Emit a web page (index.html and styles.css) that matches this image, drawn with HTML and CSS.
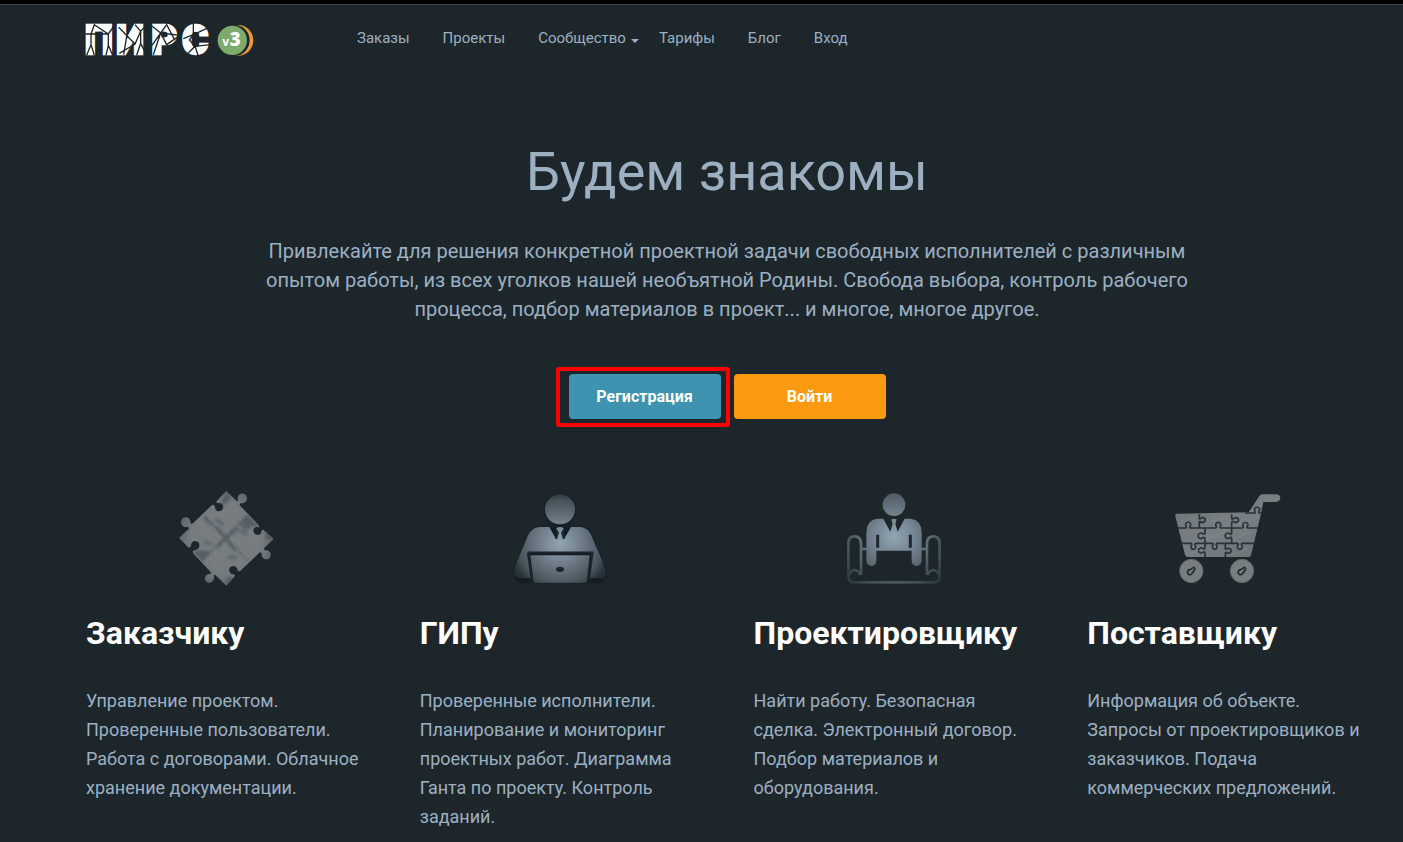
FILE: index.html
```html
<!DOCTYPE html>
<html lang="ru">
<head>
<meta charset="utf-8">
<meta name="viewport" content="width=device-width, initial-scale=1">
<title>ПИРС</title>
<link rel="stylesheet" href="styles.css">
</head>
<body>
<header class="header">
  <a class="logo" href="#" aria-label="ПИРС v3">
    <svg class="logo-image" viewBox="24 60 516 120">
      <text class="logo-name" x="26 121 226 318" y="162">ПИРС</text>
      <path class="logo-cracks" d="M28 102H97M45 102L55 74L97 102L114 78M45 102V134L32 166M45 134L55 166M97 102V136L90 166M97 136L110 166M128 82L177 132L194 94L177 74M194 94L212 74M177 132L130 160M152 110L143 164M194 94V130L182 166M194 130L212 166M254 99L228 78M254 99L272 74L294 116M254 99L312 106M254 99L232 164M254 99L272 134L312 106M228 136L254 99M322 116L352 104V72M352 104L404 80M352 104L340 120L357 139L404 134M357 139L334 162M357 139L367 168"/>
      <circle cx="486" cy="121" r="46" fill="#e79a36"/>
      <circle cx="474" cy="121" r="47" fill="#1c262b"/>
      <circle cx="469" cy="121" r="44" fill="#7eaa6c"/>
      <text class="logo-v" x="439" y="139">v</text>
      <text class="logo-three" x="461" y="139">3</text>
    </svg>
  </a>
  <nav class="nav">
    <a href="#">Заказы</a>
    <a href="#">Проекты</a>
    <a class="has-menu" href="#">Сообщество</a>
    <a href="#">Тарифы</a>
    <a href="#">Блог</a>
    <a href="#">Вход</a>
  </nav>
</header>
<main class="main">
  <section class="hero">
    <h1>Будем знакомы</h1>
    <p>Привлекайте для решения конкретной проектной задачи свободных исполнителей с различным опытом работы, из всех уголков нашей необъятной Родины. Свобода выбора, контроль рабочего процесса, подбор материалов в проект... и многое, многое другое.</p>
    <div class="actions">
      <button class="button register" type="button">Регистрация</button>
      <button class="button login" type="button">Войти</button>
    </div>
  </section>
  <section class="roles">
    <article class="role">
      <svg class="role-icon" viewBox="4 15 330 330" aria-hidden="true">
        <defs>
          <radialGradient id="steel"><stop offset="0" stop-color="#777d81"/><stop offset=".75" stop-color="#757b7f"/><stop offset="1" stop-color="#62696e"/></radialGradient>
          <filter id="soft"><feGaussianBlur stdDeviation="3"/></filter>
          <clipPath id="puzzle-clip"><path id="puzzle" d="M170 33L201 63C207 63 203 57 205 49C211 36 230 39 232 53C233 65 225 71 213 70C207 71 210 76 214 80L266 134C272 142 266 142 260 141C249 143 249 157 257 163C267 169 276 162 276 153C277 147 281 149 285 153L312 176L284 204C281 209 285 211 293 211C305 214 307 230 297 236C286 241 276 233 276 224C276 216 273 215 268 219L214 271C207 277 204 273 203 266C198 255 182 256 179 266C176 277 184 283 192 283C198 284 195 290 191 294L170 317L139 287C134 281 132 286 133 295C131 308 116 313 109 304C102 295 107 284 118 282C125 282 126 279 121 274L73 223C66 216 70 211 78 210C89 208 93 194 86 187C77 179 65 185 64 195C64 202 59 205 54 200L28 174L56 148C61 143 57 140 47 142C36 139 31 129 36 119C43 108 58 110 61 121C62 129 64 134 70 130L126 76C133 71 136 78 137 87C141 97 157 96 160 85C163 74 155 68 146 69C139 69 139 65 143 61Z"/></clipPath>
        </defs>
        <use href="#puzzle" fill="url(#steel)"/>
        <g clip-path="url(#puzzle-clip)">
          <path d="M208 130L235 105L268 140L246 139L229 155ZM70 213L96 211L122 216L98 244ZM155 67L175 35L181 58L160 78ZM287 150L314 176L288 180ZM172 293L191 292L172 319Z" fill="#485156" opacity=".65" filter="url(#soft)"/>
          <path d="M104 110L235 242M234 105L98 240M142 143L195 208M199 145L142 205" stroke="#485156" stroke-width="6" opacity=".4" filter="url(#soft)"/>
          <path d="M108 116L127 132M142 119L160 133M142 143L195 208M150 192L202 146M108 187L124 190M211 151L229 162M178 231L198 233" stroke="#40494f" stroke-width="11" stroke-linecap="round" opacity=".35" filter="url(#soft)"/>
          <path d="M68 153L92 201M91 123L146 238M112 105L166 204M147 90L206 217M178 52L231 151M121 228L155 295M199 170L230 236M229 143L268 209M163 216L192 269" stroke="#a0a5a6" stroke-width="2" opacity=".28"/>
        </g>
      </svg>
      <h2>Заказчику</h2>
      <p>Управление проектом. Проверенные пользователи. Работа с договорами. Облачное хранение документации.</p>
    </article>
    <article class="role">
      <svg class="role-icon" viewBox="0 0 330 330" aria-hidden="true">
        <defs>
          <radialGradient id="manager" gradientUnits="userSpaceOnUse" cx="165" cy="174" r="152"><stop offset="0" stop-color="#91a4b3"/><stop offset=".45" stop-color="#6d7b86"/><stop offset=".85" stop-color="#46525a"/><stop offset="1" stop-color="#263138"/></radialGradient>
        </defs>
        <path d="M165 29a46 46 0 0 0-46 45c0 34 21 50 46 50s46-16 46-50a46 46 0 0 0-46-45ZM104 126Q82 128 72 147L32 245Q20 293 55 293H275Q312 293 298 247L260 151Q250 126 228 126Z" fill="#10191e" opacity=".65" filter="url(#soft)"/>
        <circle cx="165" cy="73" r="45" fill="url(#manager)"/>
        <path d="M103 126H133L154 164L160 143L154 129Q165 123 176 129L171 143L176 164L198 126H229Q249 130 257 147L297 239Q309 280 286 280H251L263 202H68L78 280H45Q21 275 31 242L69 151Q80 128 103 126Z" fill="url(#manager)"/>
        <path d="M76 211H254L245 293H86Z" fill="url(#manager)"/>
        <path d="M69 203H262L251 288M69 203L81 288" fill="none" stroke="#1b252b" stroke-width="7"/>
        <path d="M151 134L158 143L153 161M179 134L172 143L177 161" fill="none" stroke="#1c262b" stroke-width="7"/>
        <ellipse cx="165" cy="253" rx="12" ry="8" fill="#1c262b"/>
      </svg>
      <h2>ГИПу</h2>
      <p>Проверенные исполнители. Планирование и мониторинг проектных работ. Диаграмма Ганта по проекту. Контроль заданий.</p>
    </article>
    <article class="role">
      <svg class="role-icon" viewBox="3 0 330 330" aria-hidden="true">
        <defs>
          <radialGradient id="designer" gradientUnits="userSpaceOnUse" cx="168" cy="155" r="180"><stop offset="0" stop-color="#92a5b4"/><stop offset=".45" stop-color="#6b7985"/><stop offset=".8" stop-color="#45525a"/><stop offset="1" stop-color="#303c44"/></radialGradient>
        </defs>
        <circle cx="168" cy="59" r="34" fill="url(#designer)"/>
        <path d="M116 101H136L157 140L164 116L160 103Q168 99 176 103L172 116L179 140L200 101H220Q251 107 251 142V226Q250 242 236 243Q221 242 221 226V197H115V226Q115 242 101 243Q86 242 85 226V142Q85 107 116 101Z" fill="url(#designer)"/>
        <path d="M119 149V188M217 149V188" stroke="#1c262b" stroke-width="9"/>
        <path d="M71 192H86M250 192H266M69 270V175Q68 154 50 154Q31 154 31 175V273Q31 292 50 292H286Q305 292 305 273V175Q304 154 286 154Q268 154 267 175V270M33 270Q39 255 50 255Q63 257 67 270M269 270Q273 257 286 255Q300 257 303 270" fill="none" stroke="url(#designer)" stroke-width="8"/>
      </svg>
      <h2>Проектировщику</h2>
      <p>Найти работу. Безопасная сделка. Электронный договор. Подбор материалов и оборудования.</p>
    </article>
    <article class="role">
      <svg class="role-icon cart-icon" viewBox="0 0 375 330" aria-hidden="true">
        <defs><linearGradient id="cart" x2="1" y2="1"><stop stop-color="#6e7478"/><stop offset=".5" stop-color="#797f83"/><stop offset="1" stop-color="#6a7175"/></linearGradient></defs>
        <path d="M36 86H288L295 51L317 51H333Q346 48 346 39Q345 29 333 28H291Q285 29 281 36L251 82M36 86H288L258 211Q257 216 250 216H69Q62 216 60 209L31 94Q29 86 36 86Z" fill="url(#cart)"/>
        <path d="M38 129H60C69 129 61 124 62 117C65 109 74 109 77 117C78 124 70 129 79 129H149C159 129 152 124 152 118C154 110 165 110 167 118C168 124 161 129 169 129H230C240 129 233 124 233 118C235 110 247 110 249 118C249 124 241 129 250 129H279M49 175H76C84 175 78 181 78 187C81 195 90 195 92 187C92 181 85 175 94 175H140C149 175 142 181 142 187C145 195 154 195 156 187C156 181 149 175 158 175H215C224 175 217 181 217 187C219 195 230 195 232 187C232 181 225 175 233 175H269M103 88V98C103 107 106 99 113 98C123 100 123 110 113 113C106 112 103 103 103 115V129M200 88V98C200 107 206 99 213 98C223 100 223 110 213 113C206 112 200 103 200 115V129M120 130V143C120 153 113 143 106 144C97 147 97 158 106 161C114 161 120 150 120 163V187C120 198 113 187 107 189C97 192 98 201 107 204C114 205 120 194 120 207V216M200 130V143C200 153 194 143 187 144C178 147 178 158 187 161C195 161 200 150 200 163V174M181 175V188C181 198 187 188 192 190C201 193 201 202 192 205C186 206 181 196 181 207V216M240 84H267C274 84 268 77 268 72C271 65 281 65 284 72C284 77 277 84 285 84H293" fill="none" stroke="#283238" stroke-width="5"/>
        <g fill="#777d81" stroke="#60686c" stroke-width="3"><circle cx="79" cy="258" r="35"/><circle cx="231" cy="258" r="35"/></g>
        <g fill="#777d81" stroke="#20292d" stroke-width="5"><path id="key" d="M76 254L86 247Q92 249 88 256L82 264Q80 270 73 269Q65 265 69 257Q72 253 76 254Z"/><use href="#key" x="152"/></g>
        <path d="M47 114L92 98M121 164L182 140M206 161L273 137M125 112L188 97M213 120L281 98M75 205L116 192M207 206L248 191" stroke="#a0a4a5" stroke-width="2" opacity=".3"/>
      </svg>
      <h2>Поставщику</h2>
      <p>Информация об объекте. Запросы от проектировщиков и заказчиков. Подача коммерческих предложений.</p>
    </article>
  </section>
</main>
</body>
</html>
```
FILE: styles.css
```css
* { box-sizing: border-box; }
body {
  margin: 0;
  background: #1c262b;
  color: #9cb0c2;
  font-family: Roboto, sans-serif;
  border-top: 4px solid #000;
}
h1, h2, p { margin: 0; }
a { color: inherit; text-decoration: none; }
.header {
  display: flex;
  align-items: flex-start;
  gap: 101px;
  padding: 15px 35px 0 84px;
  border-top: 1px solid #444;
}
.logo-image { display: block; width: 172px; height: 40px; overflow: visible; }
.logo-name {
  font-family: Roboto, sans-serif;
  font-size: 120px;
  font-weight: 900;
  fill: #fff;
  stroke: #fff;
  stroke-width: 7px;
}
.logo-cracks { fill: none; stroke: #1c262b; stroke-width: 4px; }
.logo-v { font-family: "Open Sans", sans-serif; font-size: 36px; font-weight: 700; fill: #fff; }
.logo-three { font-family: "Open Sans", sans-serif; font-size: 56px; font-weight: 800; fill: #fff; }
.nav {
  display: flex;
  gap: 33px;
  padding-top: 8px;
  font-size: 15px;
  line-height: 20px;
}
.has-menu { position: relative; }
.has-menu::after {
  content: "";
  position: absolute;
  left: 100%;
  top: 11px;
  margin-left: 5px;
  border: 4px solid transparent;
  border-top-color: currentColor;
  border-bottom: 0;
}
.main { padding: 0 35px 20px 86px; }
.hero {
  display: flex;
  flex-direction: column;
  align-items: center;
  padding-top: 80px;
  text-align: center;
}
.hero h1 { font-size: 54px; font-weight: 400; line-height: 64px; }
.hero p { max-width: 960px; margin-top: 33px; font-size: 20px; line-height: 29px; }
.actions { display: flex; gap: 13px; margin-top: 50px; }
.button {
  position: relative;
  width: 152px;
  height: 45px;
  padding: 0;
  border: 0;
  border-radius: 4px;
  color: #fff;
  font: 700 16px/20px Roboto, sans-serif;
}
.register { background: #3d93b0; }
.register::after {
  content: "";
  position: absolute;
  inset: -7px -9px -8px -13px;
  border: 4px solid #f00;
  border-radius: 3px;
}
.login { background: #fb9a10; }
.roles {
  display: grid;
  grid-template-columns: repeat(4, minmax(0, 1fr));
  gap: 53px;
  padding-top: 66px;
}
.role-icon { display: block; width: 110px; height: 110px; margin: 0 auto; }
.cart-icon { width: 125px; }
.role h2 {
  margin-top: 18px;
  color: #fff;
  font-size: 32px;
  font-weight: 700;
  line-height: 40px;
}
.role p { margin-top: 33px; font-size: 18px; line-height: 29px; }
```
